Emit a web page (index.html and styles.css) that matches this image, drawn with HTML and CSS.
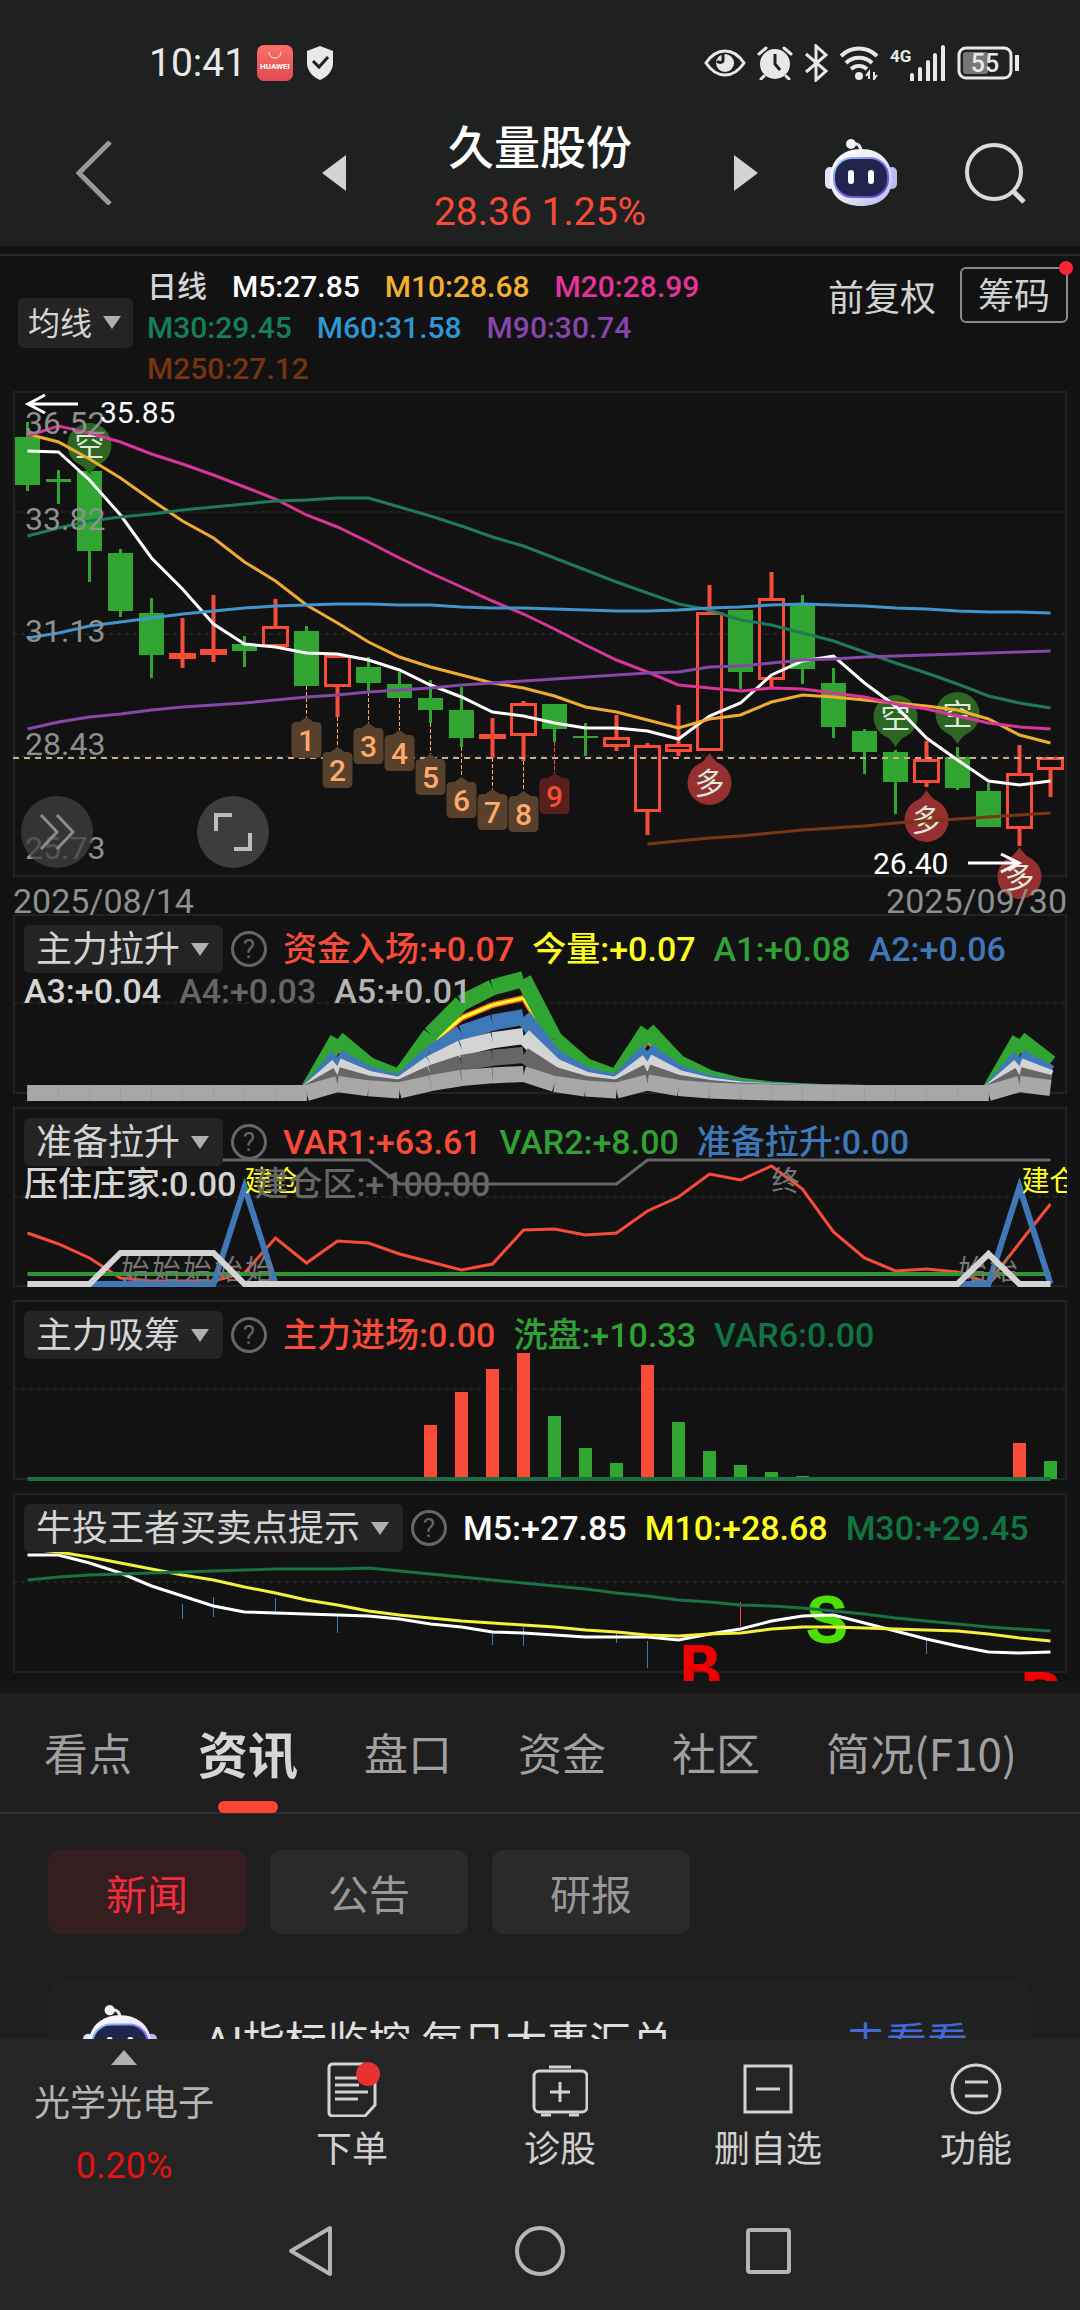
FILE: index.html
```html
<!DOCTYPE html>
<html lang="zh-CN">
<head>
    <meta charset="UTF-8">
    <meta name="viewport" content="width=device-width, initial-scale=1.0">
    <title>久量股份</title>
    <link rel="stylesheet" href="styles.css">
</head>
<body>
    <svg width="0" height="0" class="defs" aria-hidden="true">
        <defs>
            <linearGradient id="shell" x1="0" y1="0" x2="1" y2="1">
                <stop offset="0" stop-color="#ffffff"/>
                <stop offset="0.5" stop-color="#eceafa"/>
                <stop offset="1" stop-color="#b9b3ea"/>
            </linearGradient>
            <linearGradient id="rim" x1="0" y1="0" x2="1" y2="1">
                <stop offset="0" stop-color="#8fd4f5"/>
                <stop offset="0.5" stop-color="#8a6bf0"/>
                <stop offset="1" stop-color="#5b3fc0"/>
            </linearGradient>
            <linearGradient id="store" x1="0" y1="0" x2="0" y2="1">
                <stop offset="0" stop-color="#fb7064"/>
                <stop offset="1" stop-color="#e04a54"/>
            </linearGradient>
            <symbol id="robot" viewBox="0 0 72 68">
                <path d="M36 13C36 7 33 4 28 5" fill="none" stroke="#e6e4f6" stroke-width="3" stroke-linecap="round"/>
                <circle cx="26" cy="5" r="5" fill="#f4f3fb"/>
                <rect x="0" y="28" width="10" height="22" rx="5" fill="#e3e1f7"/>
                <rect x="62" y="28" width="10" height="22" rx="5" fill="#bdb8ee"/>
                <path d="M36 10C56 10 67 23 67 40C67 58 54 67 36 67C18 67 5 58 5 40C5 23 16 10 36 10Z" fill="url(#shell)"/>
                <rect x="9" y="19" width="54" height="39" rx="18" fill="#20254d" stroke="url(#rim)" stroke-width="2"/>
                <rect x="23" y="31" width="6" height="14" rx="3" fill="#fff"/>
                <rect x="43" y="31" width="6" height="14" rx="3" fill="#fff"/>
            </symbol>
        </defs>
    </svg>

    <header class="top">
        <div class="status">
            <span class="clock">10:41</span>
            <svg class="status-app" width="36" height="36" viewBox="0 0 36 36">
                <rect width="36" height="36" rx="7" fill="url(#store)"/>
                <path d="M12 7C12 15 24 15 24 7" fill="none" stroke="#fff" stroke-width="1"/>
                <text x="18" y="24" text-anchor="middle" class="store-text">HUAWEI</text>
            </svg>
            <svg width="30" height="34" viewBox="0 0 30 34">
                <path d="M15 0L28 5V17C28 25 22 31 15 34C8 31 2 25 2 17V5Z" fill="#e8e8e8"/>
                <path d="M8 15L14 21L23 11" fill="none" stroke="#1f2120" stroke-width="3"/>
            </svg>
            <span class="spacer"></span>
            <svg width="42" height="28" viewBox="0 0 42 28">
                <path d="M2 14C8 5 14 2 21 2S34 5 40 14C34 23 28 26 21 26S8 23 2 14Z" fill="none" stroke="#e8e8e8" stroke-width="3"/>
                <circle cx="21" cy="14" r="9" fill="#e8e8e8"/>
                <path d="M19 5V11C19 14 15 14 13 12" fill="none" stroke="#1f2120" stroke-width="3"/>
            </svg>
            <svg width="36" height="34" viewBox="0 0 36 34">
                <circle cx="18" cy="18" r="15" fill="#e8e8e8"/>
                <path d="M18 8V18L23 24" fill="none" stroke="#1f2120" stroke-width="3"/>
                <path d="M2 8L9 2M34 8L27 2M7 30L4 33M29 30L32 33" stroke="#e8e8e8" stroke-width="3" stroke-linecap="round"/>
            </svg>
            <svg width="24" height="38" viewBox="0 0 24 38">
                <path d="M2 10L22 27L12 36V2L22 11L2 28" fill="none" stroke="#e8e8e8" stroke-width="3"/>
            </svg>
            <svg width="40" height="34" viewBox="0 0 40 34">
                <path d="M2 10C12 0 28 0 38 10M7 17C14 10 26 10 33 17M12 23C17 19 23 19 28 23" fill="none" stroke="#e8e8e8" stroke-width="4"/>
                <circle cx="20" cy="30" r="4" fill="#e8e8e8"/>
                <path d="M30 33V26L27 30M35 26V33L38 29" fill="none" stroke="#e8e8e8" stroke-width="2"/>
            </svg>
            <svg width="56" height="36" viewBox="0 0 56 36">
                <text x="0" y="17" class="net-text">4G</text>
                <path d="M22 35V30M30 35V24M38 35V17M45 35V10M53 35V2" stroke="#e8e8e8" stroke-width="4" stroke-linecap="round"/>
            </svg>
            <svg class="battery" width="62" height="34" viewBox="0 0 62 34">
                <rect x="2" y="2" width="52" height="30" rx="7" fill="none" stroke="#e8e8e8" stroke-width="3"/>
                <rect x="6" y="6" width="25" height="22" rx="3" fill="#777"/>
                <path d="M60 9V25" stroke="#e8e8e8" stroke-width="4"/>
                <text x="28" y="26" text-anchor="middle" class="battery-text">55</text>
            </svg>
        </div>
        <div class="title-bar">
            <button class="icon-btn back" aria-label="返回">
                <svg width="36" height="64" viewBox="0 0 36 64"><path d="M34 1L3 32L34 63" fill="none" stroke="#999" stroke-width="5"/></svg>
            </button>
            <button class="icon-btn" aria-label="上一只">
                <svg width="24" height="36" viewBox="0 0 24 36"><path d="M24 0V36L0 18Z" fill="#d3d3d3"/></svg>
            </button>
            <div class="stock">
                <h1>久量股份</h1>
                <p>28.36 1.25%</p>
            </div>
            <button class="icon-btn next" aria-label="下一只">
                <svg width="24" height="36" viewBox="0 0 24 36"><path d="M0 0V36L24 18Z" fill="#d3d3d3"/></svg>
            </button>
            <button class="icon-btn robot" aria-label="智能助手">
                <svg width="72" height="68"><use href="#robot"/></svg>
            </button>
            <button class="icon-btn" aria-label="搜索">
                <svg width="62" height="62" viewBox="0 0 62 62">
                    <circle cx="30" cy="30" r="27" fill="none" stroke="#dadada" stroke-width="4"/>
                    <path d="M49 49L60 60" stroke="#dadada" stroke-width="5"/>
                </svg>
            </button>
        </div>
    </header>

    <section class="charts">
        <div class="ma-bar">
            <label class="picker small">
                <select aria-label="主图指标"><option>均线</option></select>
            </label>
            <div class="ma-list">
                <span class="c-light">日线</span>
                <span class="c-white">M5:27.85</span>
                <span class="c-orange">M10:28.68</span>
                <span class="c-pink">M20:28.99</span>
                <span class="c-teal">M30:29.45</span>
                <span class="c-sky">M60:31.58</span>
                <span class="c-purple">M90:30.74</span>
                <span class="c-brown">M250:27.12</span>
            </div>
            <button class="adjust">前复权</button>
            <button class="chips">筹码</button>
        </div>

        <div class="main-chart">
            <svg id="kline" viewBox="13 391 1054 486"></svg>
            <button class="round more" aria-label="更多">
                <svg width="36" height="36" viewBox="0 0 36 36"><path d="M2 1L18 18L2 35M18 1L34 18L18 35" fill="none" stroke="#8c8c8c" stroke-width="3"/></svg>
            </button>
            <button class="round full" aria-label="全屏">
                <svg width="38" height="38" viewBox="0 0 38 38"><path d="M2 18V2H18M36 20V36H20" fill="none" stroke="#bdbdbd" stroke-width="4"/></svg>
            </button>
        </div>
        <div class="dates"><span>2025/08/14</span><span>2025/09/30</span></div>

        <div class="panel">
            <svg id="sub1" viewBox="13 914 1054 180"></svg>
            <div class="legend">
                <div class="pick-group">
                    <label class="picker"><select aria-label="副图指标一"><option>主力拉升</option></select></label>
                    <button class="help" aria-label="说明">?</button>
                </div>
                <span class="c-red">资金入场:+0.07</span>
                <span class="c-yellow">今量:+0.07</span>
                <span class="c-green">A1:+0.08</span>
                <span class="c-blue">A2:+0.06</span>
                <span class="c-light">A3:+0.04</span>
                <span class="c-dim">A4:+0.03</span>
                <span class="c-grey">A5:+0.01</span>
            </div>
        </div>

        <div class="panel">
            <svg id="sub2" viewBox="13 1107 1054 180"></svg>
            <div class="legend">
                <div class="pick-group">
                    <label class="picker"><select aria-label="副图指标二"><option>准备拉升</option></select></label>
                    <button class="help" aria-label="说明">?</button>
                </div>
                <span class="c-red">VAR1:+63.61</span>
                <span class="c-green">VAR2:+8.00</span>
                <span class="c-blue">准备拉升:0.00</span>
                <span class="c-light">压住庄家:0.00</span>
                <span class="c-dim">建仓区:+100.00</span>
            </div>
        </div>

        <div class="panel">
            <svg id="sub3" viewBox="13 1300 1054 180"></svg>
            <div class="legend">
                <div class="pick-group">
                    <label class="picker"><select aria-label="副图指标三"><option>主力吸筹</option></select></label>
                    <button class="help" aria-label="说明">?</button>
                </div>
                <span class="c-red">主力进场:0.00</span>
                <span class="c-green">洗盘:+10.33</span>
                <span class="c-forest">VAR6:0.00</span>
            </div>
        </div>

        <div class="panel">
            <svg id="sub4" viewBox="13 1493 1054 180"></svg>
            <div class="legend">
                <div class="pick-group">
                    <label class="picker"><select aria-label="副图指标四"><option>牛投王者买卖点提示</option></select></label>
                    <button class="help" aria-label="说明">?</button>
                </div>
                <span class="c-white">M5:+27.85</span>
                <span class="c-yellow">M10:+28.68</span>
                <span class="c-forest">M30:+29.45</span>
            </div>
        </div>
    </section>

    <main class="info">
        <nav class="tabs">
            <a href="#">看点</a>
            <a href="#" class="active">资讯</a>
            <a href="#">盘口</a>
            <a href="#">资金</a>
            <a href="#">社区</a>
            <a href="#">简况(F10)</a>
        </nav>
        <div class="filters">
            <button class="active">新闻</button>
            <button>公告</button>
            <button>研报</button>
        </div>
        <div class="card">
            <svg width="74" height="74" viewBox="0 0 72 68"><use href="#robot"/></svg>
            <span class="card-text">AI指标监控 每日大事汇总</span>
            <a href="#">去看看</a>
        </div>
    </main>

    <footer class="bottom">
        <div class="actions">
            <button class="sector">
                <svg width="26" height="15" viewBox="0 0 26 15"><path d="M13 0L26 15H0Z" fill="#b0b0b0"/></svg>
                <span>光学光电子</span>
                <span class="change">0.20%</span>
            </button>
            <button>
                <svg width="56" height="56" viewBox="0 0 56 56" fill="none" stroke="#d2d2d2" stroke-width="3">
                    <path d="M40 3H9Q5 3 5 7V51Q5 55 9 55H41L51 44V20"/>
                    <path d="M11 17H35M11 24H35M11 31H44M11 38H34"/>
                    <circle cx="44" cy="13" r="12" fill="#e83232" stroke="none"/>
                </svg>
                <span>下单</span>
            </button>
            <button>
                <svg width="56" height="56" viewBox="0 0 56 56" fill="none" stroke="#d2d2d2" stroke-width="3">
                    <rect x="2" y="10" width="53" height="41" rx="5"/>
                    <path d="M17 6H39M28 21V41M18 31H38M9 54H19M37 54H47"/>
                </svg>
                <span>诊股</span>
            </button>
            <button>
                <svg width="56" height="56" viewBox="0 0 56 56" fill="none" stroke="#d2d2d2" stroke-width="3">
                    <rect x="5" y="5" width="46" height="46"/>
                    <path d="M16 28H40"/>
                </svg>
                <span>删自选</span>
            </button>
            <button>
                <svg width="56" height="56" viewBox="0 0 56 56" fill="none" stroke="#d2d2d2" stroke-width="3">
                    <circle cx="28" cy="28" r="24"/>
                    <path d="M17 21H40M17 35H40"/>
                </svg>
                <span>功能</span>
            </button>
        </div>
        <div class="sys-nav">
            <button aria-label="返回"><svg width="50" height="52" viewBox="0 0 50 52"><path d="M44 3V49L5 26Z" fill="none" stroke="#b5b5b5" stroke-width="4" stroke-linejoin="round"/></svg></button>
            <button aria-label="主页"><svg width="52" height="52" viewBox="0 0 52 52"><circle cx="26" cy="26" r="23" fill="none" stroke="#b5b5b5" stroke-width="4"/></svg></button>
            <button aria-label="最近任务"><svg width="48" height="48" viewBox="0 0 48 48"><rect x="3" y="3" width="41" height="42" rx="2" fill="none" stroke="#b5b5b5" stroke-width="4"/></svg></button>
        </div>
    </footer>

    <script src="charts.js"></script>
</body>
</html>
```
FILE: styles.css
```css
* { box-sizing: border-box; margin: 0; padding: 0; }
body {
    display: flex; flex-direction: column; height: 100vh; overflow: hidden;
    background: #1e1e1e; color: #d0d0d0;
    font-family: Roboto, "Noto Sans CJK SC", sans-serif;
}
button, select { font: inherit; color: inherit; background: none; border: none; }
a { color: inherit; text-decoration: none; }
svg { display: block; flex: none; }
.defs { position: absolute; }

/* colours of the indicator values */
.c-white { color: #fff; }
.c-light { color: #d4d4d4; }
.c-grey { color: #b4b4b4; }
.c-dim { color: #666; }
.c-orange { color: #f5b02e; }
.c-pink { color: #e5339c; }
.c-teal { color: #157f57; }
.c-sky { color: #2f96d4; }
.c-purple { color: #8746ab; }
.c-brown { color: #78330f; }
.c-red { color: #f84b38; }
.c-yellow { color: #ffff1e; }
.c-green { color: #31a035; }
.c-blue { color: #3f78b9; }
.c-forest { color: #107540; }

/* status bar and title */
.top { background: #1f2120; flex: none; }
.status { display: flex; align-items: center; gap: 11px; height: 98px; padding: 28px 61px 0 149px; }
.clock { font-size: 39px; color: #e8e8e8; }
.status-app { margin-right: 1px; }
.spacer { flex: 1; }
.store-text { font-size: 8px; fill: #fff; font-weight: bold; }
.net-text { font-size: 17px; fill: #e8e8e8; font-weight: bold; }
.battery-text { font-size: 25px; fill: #e8e8e8; font-weight: 500; }
.title-bar { display: flex; align-items: center; height: 148px; padding: 2px 54px 0 76px; }
.icon-btn { display: flex; }
.back { margin-right: 210px; }
.stock { flex: 1; text-align: center; padding-top: 10px; }
.stock h1 { font-size: 46px; line-height: 64px; font-weight: 500; color: #fff; margin-bottom: 4px; }
.stock p { font-size: 39px; line-height: 56px; color: #f84b38; }
.next { margin-right: 67px; }
.robot { margin-right: 67px; }

/* charts */
.charts { flex: none; background: #121212; padding: 8px 0; overflow: hidden; }
.ma-bar { display: flex; align-items: flex-start; padding: 10px 12px 2px 18px; border-top: 2px solid #2a2a2a; }
.picker { position: relative; display: flex; flex: none; background: #242424; border-radius: 6px; }
.picker select { appearance: none; height: 48px; padding: 2px 42px 0 12px; font-size: 36px; line-height: 46px; color: #d4d4d4; }
.picker::after {
    content: ""; position: absolute; right: 14px; top: 18px;
    border: 9px solid transparent; border-top: 13px solid #b0b0b0; border-bottom: 0;
}
.picker.small { margin-top: 32px; }
.picker.small select { height: 50px; padding: 2px 40px 0 10px; font-size: 32px; }
.picker.small::after { right: 12px; }
.ma-list { display: flex; flex-wrap: wrap; flex: 1; column-gap: 25px; margin: 0 60px 0 14px; font-size: 30px; line-height: 41px; font-weight: 500; }
.adjust { font-size: 36px; line-height: 52px; margin: 7px 24px 0 0; }
.chips { position: relative; width: 108px; height: 56px; padding-top: 3px; font-size: 36px; line-height: 48px; border: 2px solid #8a8a8a; border-radius: 6px; margin-top: 1px; }
.chips::after { content: ""; position: absolute; right: -7px; top: -8px; width: 14px; height: 14px; border-radius: 50%; background: #fb2535; }

.main-chart, .panel { display: grid; margin: 0 13px; box-shadow: inset 0 0 0 2px #222; }
.main-chart { position: relative; }
.main-chart > svg, .panel > svg { width: 100%; height: auto; overflow: visible; grid-area: 1 / 1; }
.round { position: absolute; bottom: 9px; display: flex; align-items: center; justify-content: center; width: 72px; height: 72px; border-radius: 50%; }
.more { left: 8px; background: rgba(64, 64, 64, 0.75); }
.full { left: 184px; background: #3d3d3d; }
.dates { position: relative; display: flex; justify-content: space-between; padding: 5px 13px 0; font-size: 34px; line-height: 38px; height: 37px; color: #8f8f8f; }
.panel { margin-bottom: 13px; }
.panel:last-child { margin-bottom: 0; }
.legend { grid-area: 1 / 1; position: relative; display: flex; flex-wrap: wrap; align-items: center; align-content: flex-start; padding: 11px 0 0 11px; font-size: 34px; line-height: 36px; font-weight: 500; }
.legend > span { margin-right: 18px; }
.pick-group { display: flex; align-items: center; gap: 8px; margin-right: 16px; font-weight: 400; }
.help { width: 36px; height: 36px; border: 3px solid #666; border-radius: 50%; font-size: 26px; line-height: 30px; color: #666; }

.axis { font-size: 32px; fill: #8f8f8f; }
.price { font-size: 30px; fill: #fff; }
.tag { font-size: 30px; font-weight: 500; text-anchor: middle; }
.pin { font-size: 30px; text-anchor: middle; fill: #dfeadb; }
.note { font-size: 28px; }
.letter { font-family: "Liberation Mono", monospace; font-weight: bold; font-size: 70px; }

/* information area */
.info { flex: 1; min-height: 0; overflow: hidden; border-top: 12px solid #161616; }
.tabs { display: flex; align-items: center; gap: 66px; height: 121px; padding: 0 44px; border-bottom: 2px solid #303030; font-size: 44px; font-family: "Noto Sans CJK SC", sans-serif; color: #a0a0a0; white-space: nowrap; }
.tabs .active { position: relative; font-size: 50px; font-weight: bold; color: #d6d6d6; }
.tabs a { line-height: 121px; }
.tabs .active::after { content: ""; position: absolute; left: 20px; right: 20px; bottom: 0; height: 12px; border-radius: 6px; background: #fd4633; }
.filters { display: flex; gap: 24px; padding: 36px 48px 48px; }
.filters button { width: 198px; height: 84px; border-radius: 12px; background: #2a2a2a; font-size: 41px; color: #989898; }
.filters .active { background: #351e20; color: #f42b3c; }
.card { display: flex; align-items: center; margin: 0 48px; height: 122px; padding: 0 64px 0 35px; border-radius: 14px; background: #212121; font-size: 42px; line-height: 60px; color: #dedede; }
.card svg { margin-top: -6px; }
.card-text { flex: 1; padding-left: 47px; }
.card a { color: #4169d8; font-size: 41px; }

/* bottom bar */
.bottom { flex: none; background: #252525; }
.actions { display: flex; height: 152px; }
.actions button { display: flex; flex-direction: column; align-items: center; width: 208px; flex: 208; padding-top: 22px; font-size: 36px; line-height: 50px; }
.actions button span { margin-top: 8px; }
.actions .sector { flex: 248; padding-top: 11px; color: #b4b4b4; }
.actions .sector span { margin-top: 14px; }
.actions .sector .change { margin-top: 12px; color: #e51212; }
.sys-nav { display: flex; justify-content: center; height: 119px; }
.sys-nav button { display: flex; align-items: center; justify-content: center; width: 229px; }
```
FILE: charts.js
```js
const STEP = 31, X0 = 27.5;
const RED = "#f84b38", GREEN = "#31a532";
const x = i => X0 + i * STEP;

const line = (x1, y1, x2, y2, color, w, extra = "") =>
    `<line x1="${x1}" y1="${y1}" x2="${x2}" y2="${y2}" stroke="${color}" stroke-width="${w}" ${extra}/>`;
const rect = (rx, ry, w, h, attrs) => `<rect x="${rx}" y="${ry}" width="${w}" height="${h}" ${attrs}/>`;
const text = (tx, ty, cls, str, attrs = "") => `<text x="${tx}" y="${ty}" class="${cls}" ${attrs}>${str}</text>`;
const series = (ys, color, w, start = 0) =>
    `<polyline points="${ys.map((y, i) => x(i + start) + "," + y).join(" ")}" fill="none" stroke="${color}" stroke-width="${w}"/>`;
const grid = y => line(13, y, 1067, y, "#333", 1, 'stroke-dasharray="4 4"');

function draw(id, parts) {
    document.getElementById(id).innerHTML = parts.join("");
}

// K line: [high, body top, body bottom, low, type]  g = down, r = up, f = up with a flat body
const candles = [
    [422, 437, 485, 491, "g"], [470, 479, 482, 504, "g"], [469, 471, 551, 582, "g"], [549, 553, 611, 617, "g"],
    [598, 613, 655, 678, "g"], [618, 653, 659, 668, "f"], [595, 649, 655, 662, "f"], [636, 644, 651, 667, "g"],
    [599, 626, 647, 647, "r"], [626, 631, 686, 686, "g"], [655, 655, 687, 717, "r"], [657, 667, 683, 692, "g"],
    [672, 684, 698, 698, "g"], [680, 698, 710, 723, "g"], [687, 710, 738, 747, "g"], [718, 734, 739, 758, "f"],
    [701, 703, 736, 761, "r"], [704, 704, 729, 742, "g"], [723, 736, 738, 756, "g"], [715, 737, 747, 751, "r"],
    [743, 745, 812, 835, "r"], [705, 744, 752, 756, "r"], [585, 612, 751, 751, "r"], [610, 610, 672, 689, "g"],
    [572, 598, 680, 687, "r"], [595, 605, 669, 684, "g"], [668, 683, 727, 738, "g"], [729, 731, 752, 774, "g"],
    [750, 752, 782, 814, "g"], [741, 759, 783, 787, "r"], [747, 757, 788, 790, "g"], [783, 791, 827, 827, "g"],
    [745, 773, 829, 846, "r"], [757, 757, 770, 797, "r"]
];
const ma = {
    m5: [451, 452, 480, 515, 558, 589, 624, 644, 647, 653, 654, 660, 670, 685, 697, 712, 716, 723, 728, 728, 731, 739, 716, 703, 675, 661, 656, 683, 706, 738, 760, 781, 785, 781],
    m10: [434, 442, 459, 478, 500, 521, 538, 562, 581, 605, 623, 642, 657, 667, 675, 683, 688, 696, 707, 712, 720, 728, 719, 715, 702, 695, 697, 700, 703, 706, 710, 719, 735, 743],
    m20: [436, 426, 433, 442, 454, 464, 475, 487, 499, 515, 527, 542, 558, 573, 587, 601, 614, 629, 645, 660, 672, 685, 688, 691, 688, 689, 693, 697, 704, 709, 716, 723, 727, 729],
    m30: [536, 528, 521, 517, 514, 510, 507, 504, 501, 500, 498, 498, 507, 516, 526, 537, 546, 558, 570, 582, 593, 604, 610, 620, 625, 633, 641, 652, 663, 673, 684, 696, 703, 708],
    m60: [638, 633, 626, 622, 618, 614, 611, 608, 606, 605, 604, 604, 605, 605, 607, 608, 608, 609, 610, 611, 611, 610, 608, 607, 605, 604, 605, 606, 608, 609, 611, 612, 612, 613],
    m90: [729, 722, 717, 714, 710, 707, 705, 703, 700, 697, 695, 692, 690, 688, 685, 683, 681, 679, 677, 675, 673, 672, 667, 666, 663, 660, 659, 657, 656, 655, 654, 653, 652, 651],
    m250: [844, 841, 838, 836, 833, 830, 828, 826, 823, 821, 819, 817, 815, 813]
};

function candle([high, top, bottom, low, type], i) {
    const c = x(i);
    if (type === "g") {
        return line(c, high, c, low, GREEN, 3) + rect(c - 12.5, top, 25, bottom - top, `fill="${GREEN}"`);
    }
    const body = type === "f"
        ? rect(c - 13.5, top, 27, bottom - top, `fill="${RED}"`)
        : rect(c - 12, top + 1.5, 24, bottom - top - 3, `fill="none" stroke="${RED}" stroke-width="3"`);
    return line(c, high, c, top, RED, 4) + line(c, bottom, c, low, RED, 4) + body;
}

// numbered tag hanging under a candle
function tag(n, tip) {
    const i = n + 8, c = x(i), hot = n === 9;
    const ink = hot ? RED : "#ffa96b";
    return line(c, candles[i][3], c, tip, ink, 1, 'stroke-dasharray="4 2"')
        + `<path d="M${c} ${tip}L${c + 7} ${tip + 5}H${c + 10}Q${c + 15} ${tip + 5} ${c + 15} ${tip + 10}V${tip + 36}Q${c + 15} ${tip + 41} ${c + 10} ${tip + 41}H${c - 10}Q${c - 15} ${tip + 41} ${c - 15} ${tip + 36}V${tip + 10}Q${c - 15} ${tip + 5} ${c - 10} ${tip + 5}H${c - 7}Z" fill="${hot ? "#57201c" : "#57402c"}"/>`
        + text(c, tip + 34, "tag", n, `fill="${ink}"`);
}

function pin(i, y, up) {
    const c = x(i), dir = up ? -1 : 1, fill = up ? "#962f2f" : "#2d6622";
    return `<path d="M${c - 18} ${y + 13 * dir}Q${c - 4} ${y + 22 * dir} ${c} ${y + 30 * dir}Q${c + 4} ${y + 22 * dir} ${c + 18} ${y + 13 * dir}Z" fill="${fill}"/>`
        + `<circle cx="${c}" cy="${y}" r="22" fill="${fill}"/>`
        + text(c, y + 11, "pin", up ? "多" : "空");
}

draw("kline", [
    grid(512), grid(634), grid(756),
    candles.map(candle).join(""),
    line(13, 758, 1067, 758, "#c9ad85", 2, 'stroke-dasharray="6 5"'),
    [717, 747, 723, 730, 754, 777, 789, 791, 773].map((t, k) => tag(k + 1, t)).join(""),
    pin(2, 445, false), pin(28, 717, false), pin(30, 714, false),
    pin(22, 783, true), pin(29, 820, true), pin(32, 877, true),
    series(ma.m5, "#fff", 3), series(ma.m10, "#f0ac30", 3), series(ma.m20, "#d93599", 3),
    series(ma.m30, "#1e7a5a", 3), series(ma.m60, "#3f95cc", 3), series(ma.m90, "#8648a6", 3),
    series(ma.m250, "#783713", 3, 20),
    text(25, 434, "axis", "36.52"), text(25, 530, "axis", "33.82"), text(25, 642, "axis", "31.13"),
    text(25, 755, "axis", "28.43"), text(25, 859, "axis", "25.73"),
    '<path d="M78 404H28M45 395L28 404L45 413M968 863H1018M1001 854L1019 863L1001 872" fill="none" stroke="#fff" stroke-width="3"/>',
    text(100, 423, "price", "35.85"), text(873, 874, "price", "26.40")
]);

// 主力拉升: every line is a multiple of the same factor, drawn segment by segment
const force = [0, 0, 0, 0, 0, 0, 0, 0, 0, 0, 9, 4.7, 2.6, 9.8, 15, 17.6, 19, 9, 4.5, 2.6, 10.5, 5, 2.5, 1.2, 0.6, 0.3, 0.1, 0, 0, 0, 0, 0, 9, 5];
const ribbon = (k, color, w) => force.slice(1).map((f, i) =>
    line(x(i), 1093 - force[i] * k, x(i + 1), 1093 - f * k, color, w)).join("");
draw("sub1", [
    grid(1003),
    ribbon(5, "#f63", 6), ribbon(5, "#ff2", 3), ribbon(6, GREEN, 16), ribbon(4, "#3f78b9", 16),
    ribbon(3, "#d4d4d4", 16), ribbon(2, "#666", 16), ribbon(1, "#a8a8a8", 16)
]);

// 准备拉升
const path = (pts, color, w) =>
    `<polyline points="${pts.map(([i, y]) => x(i) + "," + y).join(" ")}" fill="none" stroke="${color}" stroke-width="${w}"/>`;
draw("sub2", [
    '<clipPath id="clip2"><rect x="13" y="1107" width="1054" height="182"/></clipPath>',
    grid(1197),
    path([[0, 1160], [11, 1160], [12, 1184], [19, 1184], [20, 1160], [33, 1160]], "#666", 3),
    series([1233, 1244, 1258, 1278, 1281, 1281, 1281, 1273, 1238, 1263, 1241, 1243, 1254, 1262, 1270, 1264, 1230, 1229, 1235, 1233, 1211, 1197, 1174, 1180, 1166, 1189, 1232, 1258, 1271, 1269, 1272, 1283, 1243, 1204], RED, 3),
    path([[0, 1274], [33, 1274]], "#339636", 4),
    path([[0, 1284], [6, 1284], [7, 1187], [8, 1284], [31, 1284], [32, 1187], [33, 1284]], "#3f78b9", 6),
    [3, 4, 5, 6, 7, 30, 31].map(i => text(x(i) + 1, 1280, "note", "始", 'fill="#777"')).join(""),
    path([[0, 1284], [2, 1284], [3, 1253], [6, 1253], [7, 1284], [30, 1284], [31, 1254], [32, 1284], [33, 1284]], "#d4d4d4", 6),
    text(x(24), 1191, "note", "终", 'fill="#777"'),
    text(x(7), 1191, "note", "建仓", 'fill="#ffff1e"'),
    '<g clip-path="url(#clip2)">' + text(x(32) + 2, 1191, "note", "建仓", 'fill="#ffff1e"') + "</g>"
]);

// 主力吸筹: [index, top, colour]
const bars = [
    [13, 1425, RED], [14, 1392, RED], [15, 1369, RED], [16, 1353, RED], [17, 1416, GREEN], [18, 1448, GREEN],
    [19, 1463, GREEN], [20, 1365, RED], [21, 1422, GREEN], [22, 1451, GREEN], [23, 1465, GREEN], [24, 1472, GREEN],
    [25, 1476, GREEN], [27, 1477, GREEN], [28, 1477, GREEN], [29, 1477, GREEN], [30, 1477, GREEN], [31, 1477, GREEN],
    [32, 1443, RED], [33, 1461, GREEN]
];
draw("sub3", [
    grid(1389),
    bars.map(([i, top, color]) => rect(x(i) - 6.5, top, 13, 1479 - top, `fill="${color}"`)).join(""),
    line(X0, 1479, x(33), 1479, "#1a7040", 4)
]);

// 买卖点提示
const ticks = [[5, 1604, 1619], [6, 1597, 1617], [8, 1598, 1614], [10, 1614, 1633], [15, 1632, 1645], [16, 1627, 1646], [19, 1632, 1643], [20, 1641, 1668], [29, 1640, 1654]];
draw("sub4", [
    grid(1582),
    ticks.map(([i, a, b]) => line(x(i), a, x(i), b, "#3f78b9", 1)).join(""),
    line(x(23), 1602, x(23), 1626, RED, 1),
    text(806, 1643, "letter", "S", 'fill="#4be005"'),
    text(679, 1692, "letter", "B", 'fill="#f00000"'),
    text(1020, 1719, "letter", "B", 'fill="#f00000"'),
    series([1555, 1555, 1563, 1573, 1586, 1596, 1606, 1612, 1613, 1614, 1615, 1616, 1619, 1624, 1627, 1632, 1633, 1635, 1637, 1637, 1637, 1640, 1634, 1629, 1621, 1616, 1615, 1623, 1631, 1639, 1646, 1652, 1653, 1652], "#fff", 3),
    series([1549, 1552, 1557, 1563, 1569, 1575, 1580, 1587, 1593, 1600, 1605, 1611, 1615, 1618, 1621, 1623, 1625, 1627, 1630, 1632, 1635, 1636, 1634, 1633, 1629, 1627, 1627, 1628, 1629, 1630, 1631, 1634, 1638, 1641], "#f5f03c", 3),
    series([1580, 1577, 1575, 1574, 1573, 1572, 1571, 1570, 1569, 1569, 1569, 1568, 1571, 1574, 1577, 1580, 1583, 1586, 1589, 1593, 1596, 1600, 1602, 1605, 1606, 1608, 1611, 1614, 1618, 1621, 1624, 1627, 1629, 1631], "#187242", 3)
]);
```
